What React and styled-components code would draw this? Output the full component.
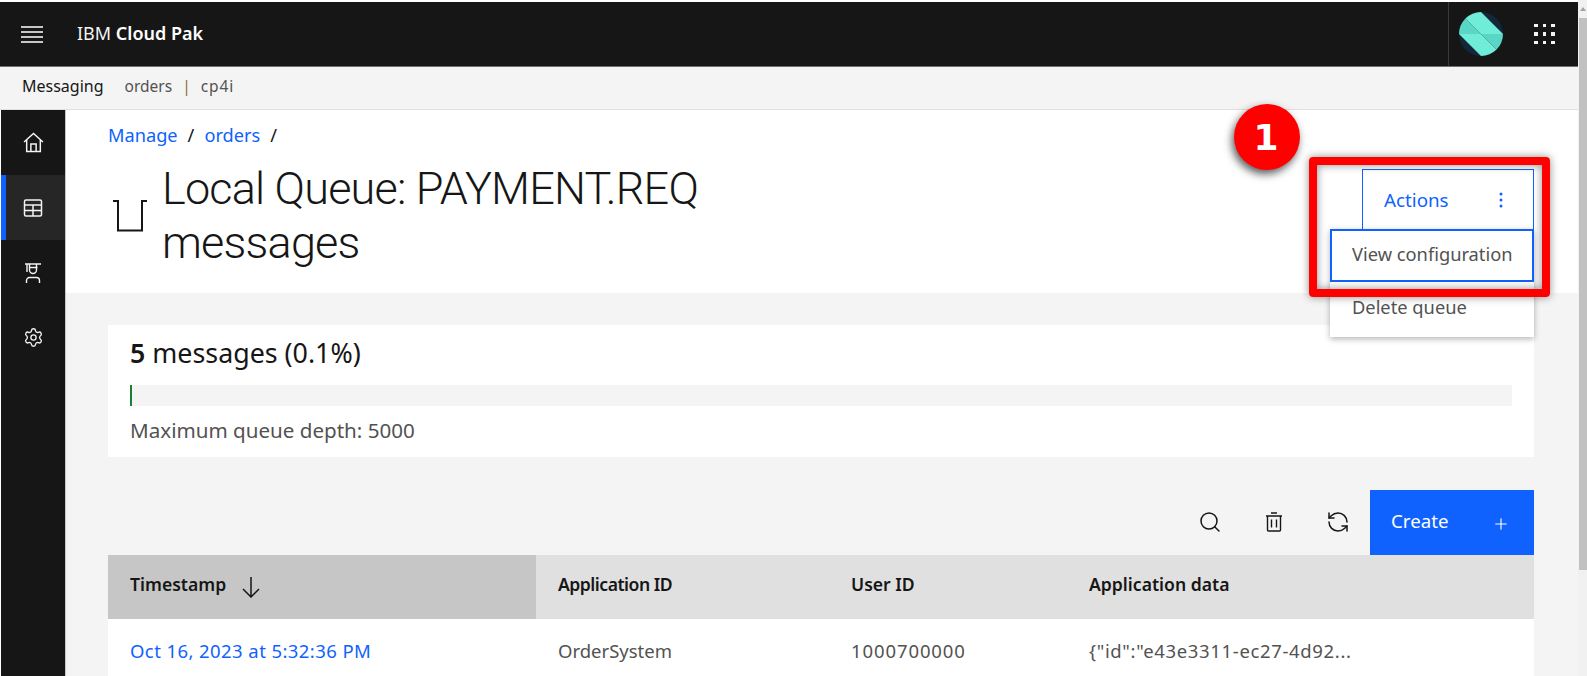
import React from "react";
import styled, { createGlobalStyle } from "styled-components";
import { Plus, Search, Settings, RefreshCcw } from "lucide-react";

const Global = createGlobalStyle`
  * { box-sizing: border-box; }
  html, body { margin: 0; padding: 0; height: 100%; overflow: hidden; background: #fff; }
  body { font-family: "Noto Sans", "Liberation Sans", sans-serif; color: #161616; }
`;

const Page = styled.div`
  display: flex;
  width: 1587px;
  height: 676px;
  overflow: hidden;
`;
const Content = styled.div`
  width: 1578px;
  display: flex;
  flex-direction: column;
  padding-top: 2px;
`;
const Scrollbar = styled.div`
  flex: 1;
  background: #f1f1f1;
  display: flex;
  flex-direction: column;
  align-items: flex-end;
`;
const ScrollArrow = styled.div`
  width: 100%;
  height: 18px;
  display: flex;
  align-items: center;
  justify-content: center;
  &::before {
    content: "";
    border-left: 3px solid transparent;
    border-right: 3px solid transparent;
    border-bottom: 4px solid #a3a3a3;
  }
`;
const ScrollThumb = styled.div`
  width: 8px;
  height: 552px;
  background: #c1c1c1;
`;

const Header = styled.header`
  height: 65px;
  flex: none;
  background: #161616;
  border-bottom: 1px solid #6f6f6f;
  display: flex;
  align-items: center;
`;
const MenuButton = styled.div`
  width: 77px;
  padding-left: 21px;
  display: flex;
  flex-direction: column;
  gap: 3px;
  span { display: block; width: 22px; height: 2px; background: #c6c6c6; }
`;
const Brand = styled.div`
  color: #f4f4f4;
  font-size: 18px;
  padding-bottom: 2px;
  flex: 1;
  b { font-weight: 600; color: #fff; }
`;
const LogoCell = styled.div`
  width: 65px;
  height: 100%;
  border-left: 1px solid #393939;
  display: flex;
  align-items: center;
  padding-left: 10px;
`;
const AppsCell = styled.div`
  width: 65px;
  height: 100%;
  display: grid;
  grid-template-columns: repeat(3, 3.5px);
  grid-auto-rows: 3.5px;
  gap: 5px;
  align-content: center;
  padding-left: 21px;
  i { background: #f4f4f4; }
`;

const SubBar = styled.div`
  height: 43px;
  flex: none;
  background: #f4f4f4;
  border-bottom: 1px solid #e0e0e0;
  display: flex;
  align-items: center;
  padding: 0 0 5px 22px;
  font-size: 16px;
  color: #161616;
`;
const Instance = styled.span`
  color: #525252;
  margin-left: 21px;
  font-size: 15.5px;
  em { font-style: normal; color: #8a6d3b; margin: 0 10px; }
`;
const InstanceName = styled.span`
  letter-spacing: 0.9px;
`;

const Body = styled.div`
  flex: 1;
  display: flex;
  min-height: 0;
`;
const Sidebar = styled.nav`
  width: 65px;
  flex: none;
  margin-left: 1px;
  background: #161616;
  border-right: 1px solid #c6c6c6;
`;
const NavItem = styled.div`
  height: 65px;
  display: flex;
  align-items: center;
  justify-content: center;
  color: #f4f4f4;
  background: ${(p) => (p.$active ? "#262626" : "transparent")};
  border-left: 5px solid ${(p) => (p.$active ? "#0f62fe" : "transparent")};
  padding-right: 5px;
`;

const Main = styled.main`
  flex: 1;
  background: #f4f4f4;
  min-width: 0;
`;
const Head = styled.section`
  position: relative;
  height: 183px;
  background: #fff;
  padding: 13px 44px 0 42px;
  display: flex;
  justify-content: space-between;
  align-items: flex-start;
`;
const Crumbs = styled.div`
  font-size: 18.2px;
  line-height: 24px;
  color: #161616;
  a { color: #0f62fe; text-decoration: none; }
  span { margin: 0 10px; }
`;
const TitleRow = styled.div`
  display: flex;
  align-items: center;
  margin-top: 15px;
`;
const QueueIcon = styled.svg`
  width: 34px;
  height: 33px;
  margin: 0 15px 2px 5px;
  flex: none;
`;
const Title = styled.h1`
  margin: 0;
  width: 600px;
  font-family: Roboto, "Noto Sans", sans-serif;
  font-size: 45px;
  letter-spacing: -0.8px;
  line-height: 54px;
  font-weight: 300;
`;
const ActionsWrap = styled.div`
  position: relative;
  margin-top: 46px;
`;
const ActionsButton = styled.div`
  width: 172px;
  height: 60px;
  border: 1px solid #0f62fe;
  border-bottom: 0;
  background: #fff;
  color: #0f62fe;
  font-size: 18.8px;
  display: flex;
  align-items: center;
  justify-content: space-between;
  padding: 0 30px 0 21px;
`;
const Menu = styled.div`
  position: absolute;
  top: 60px;
  right: 0;
  width: 204px;
  background: #fff;
  box-shadow: 0 2px 6px rgba(0, 0, 0, 0.3);
`;
const MenuItem = styled.div`
  height: ${(p) => (p.$focused ? 53 : 55)}px;
  color: #525252;
  font-size: 18.3px;
  display: flex;
  align-items: center;
  padding: 0 0 ${(p) => (p.$focused ? 4 : 6)}px ${(p) => (p.$focused ? 20 : 22)}px;
  border: ${(p) => (p.$focused ? "2px solid #0f62fe" : "none")};
`;
const Callout = styled.div`
  position: absolute;
  left: 1243px;
  top: 47px;
  width: 241px;
  height: 140px;
  border: 8px solid #f00;
  border-radius: 4px;
  box-shadow: 0 0 8px rgba(0, 0, 0, 0.45), inset 0 0 8px rgba(0, 0, 0, 0.45);
`;
const Badge = styled.div`
  position: absolute;
  left: 1168px;
  top: -6px;
  width: 66px;
  height: 66px;
  padding-right: 2px;
  border-radius: 50%;
  background: #f00;
  color: #fff;
  font: 700 36px "DejaVu Sans", sans-serif;
  display: flex;
  align-items: center;
  justify-content: center;
  box-shadow: -2px 4px 8px rgba(0, 0, 0, 0.65);
`;

const Section = styled.div`
  padding: 32px 44px 0 42px;
`;
const Card = styled.div`
  height: 132px;
  background: #fff;
  padding: 11px 22px 0;
`;
const Count = styled.div`
  font-size: 26.8px;
  line-height: 33px;
  b { font-weight: 600; }
`;
const Track = styled.div`
  height: 21px;
  margin-top: 16px;
  background: #f4f4f4;
`;
const Fill = styled.div`
  height: 100%;
  background: #198038;
`;
const Depth = styled.div`
  margin-top: 11px;
  font-size: 20.6px;
  line-height: 26px;
  color: #525252;
`;

const Toolbar = styled.div`
  display: flex;
  justify-content: flex-end;
  height: 65px;
  margin-top: 33px;
`;
const ToolButton = styled.div`
  width: 64px;
  display: flex;
  align-items: center;
  justify-content: center;
  color: #161616;
  padding-bottom: 2px;
`;
const CreateButton = styled.div`
  width: 164px;
  background: #0f62fe;
  color: #fff;
  font-size: 18.7px;
  display: flex;
  align-items: center;
  justify-content: space-between;
  padding: 0 24px 5px 21px;
  svg { margin-top: 7px; }
`;

const Columns = styled.div`
  display: grid;
  grid-template-columns: 428px 293px 238px 467px;
`;
const HeadCell = styled.div`
  height: 64px;
  background: ${(p) => (p.$sorted ? "#c6c6c6" : "#e0e0e0")};
  font-size: 17.6px;
  font-weight: 600;
  letter-spacing: ${(p) => p.$spacing || 0}px;
  display: flex;
  align-items: center;
  gap: 16px;
  padding: 0 0 6px 22px;
`;
const SortIcon = styled.svg`
  margin-top: 7px;
`;
const Cell = styled.div`
  height: 64px;
  background: #fff;
  color: ${(p) => (p.$link ? "#0f62fe" : "#525252")};
  font-size: 18.5px;
  letter-spacing: ${(p) => p.$spacing || 0}px;
  display: flex;
  align-items: center;
  padding: 0 0 2px 22px;
`;

const HomeIcon = () => (
  <svg width="21" height="21" viewBox="0 0 20 20" fill="none" stroke="currentColor" strokeWidth="1.4">
    <path d="M1 9.500 10 1.500l9 8M3.500 7.500V18.500h13V7.500M7.500 18.500V11.500h5v7" />
  </svg>
);
const TableIcon = () => (
  <svg width="20" height="20" viewBox="0 0 20 20" fill="none" stroke="currentColor" strokeWidth="1.500">
    <rect x="1.500" y="2" width="17" height="16" rx="1.500" />
    <path d="M1.500 7h17M1.500 12.500h17M10 7v11" />
  </svg>
);
const LearnIcon = () => (
  <svg width="16" height="20" viewBox="0 0 16 20" fill="none" stroke="currentColor" strokeWidth="1.400">
    <path d="M0 1h16M2 1v8M4.500 4.500h8M4.500 1v6a3.500 3.500 0 0 0 7 0V1M1.500 20v-2.500a3 3 0 0 1 3-3h7a3 3 0 0 1 3 3V20" />
  </svg>
);
const TrashIcon = () => (
  <svg width="16" height="20" viewBox="0 0 16 20" fill="none" stroke="currentColor" strokeWidth="1.400">
    <path d="M0 4h16M5 1h6M1.500 4v14a1 1 0 0 0 1 1h11a1 1 0 0 0 1-1V4M5.500 7.500v8M10.500 7.500v8" />
  </svg>
);

const Logo = () => (
  <svg width="44" height="44" viewBox="0 0 44 44">
    <defs>
      <clipPath id="logoClip"><circle cx="22" cy="22" r="22" /></clipPath>
    </defs>
    <g clipPath="url(#logoClip)">
      <rect width="44" height="44" fill="#12273a" />
      <polygon points="6,6 22,22 0,22 0,6" fill="#5ad6c6" />
      <polygon points="6,6 6,0 22,0 44,22 22,22" fill="#6fedd8" />
      <polygon points="0,22 22,22 38,38 38,44 22,44" fill="#6fedd8" />
      <polygon points="22,22 44,22 44,38 38,38" fill="#5ad6c6" />
    </g>
  </svg>
);

export default function App() {
  return (
    <Page>
      <Global />
      <Content>
        <Header>
          <MenuButton><span /><span /><span /><span /></MenuButton>
          <Brand>IBM <b>Cloud Pak</b></Brand>
          <LogoCell><Logo /></LogoCell>
          <AppsCell>{Array.from({ length: 9 }).map((_, i) => <i key={i} />)}</AppsCell>
        </Header>
        <SubBar>
          Messaging
          <Instance>orders<em>|</em><InstanceName>cp4i</InstanceName></Instance>
        </SubBar>
        <Body>
          <Sidebar>
            <NavItem><HomeIcon /></NavItem>
            <NavItem $active><TableIcon /></NavItem>
            <NavItem><LearnIcon /></NavItem>
            <NavItem><Settings size={21} strokeWidth={1.5} /></NavItem>
          </Sidebar>
          <Main>
            <Head>
              <div>
                <Crumbs><a>Manage</a><span>/</span><a>orders</a><span>/</span></Crumbs>
                <TitleRow>
                  <QueueIcon viewBox="0 0 34 33" fill="none" stroke="#161616" strokeWidth="2">
                    <path d="M0 2h5v29.500h24V2h5" />
                  </QueueIcon>
                  <Title>Local Queue: PAYMENT.REQ<br />messages</Title>
                </TitleRow>
              </div>
              <ActionsWrap>
                <ActionsButton>
                  Actions
                  <svg width="4" height="18" viewBox="0 0 4 18" fill="#0f62fe">
                    <circle cx="2" cy="3" r="1.500" /><circle cx="2" cy="9" r="1.500" /><circle cx="2" cy="15" r="1.500" />
                  </svg>
                </ActionsButton>
                <Menu>
                  <MenuItem $focused>View configuration</MenuItem>
                  <MenuItem>Delete queue</MenuItem>
                </Menu>
              </ActionsWrap>
              <Callout />
              <Badge>1</Badge>
            </Head>
            <Section>
              <Card>
                <Count><b>5</b> messages (0.1%)</Count>
                <Track><Fill style={{ width: 2 }} /></Track>
                <Depth>Maximum queue depth: 5000</Depth>
              </Card>
              <Toolbar>
                <ToolButton><Search size={24} strokeWidth={1.5} /></ToolButton>
                <ToolButton><TrashIcon /></ToolButton>
                <ToolButton><RefreshCcw size={24} strokeWidth={1.5} /></ToolButton>
                <CreateButton>Create <Plus size={18} strokeWidth={1.5} /></CreateButton>
              </Toolbar>
              <Columns>
                <HeadCell $sorted>
                  Timestamp
                  <SortIcon width="18" height="21" viewBox="0 0 18 21" fill="none" stroke="#161616" strokeWidth="1.500">
                    <path d="M9 0v20M1 12l8 8 8-8" />
                  </SortIcon>
                </HeadCell>
                <HeadCell $spacing={-0.5}>Application ID</HeadCell>
                <HeadCell>User ID</HeadCell>
                <HeadCell>Application data</HeadCell>
                <Cell $link $spacing={0.42}>Oct 16, 2023 at 5:32:36 PM</Cell>
                <Cell>OrderSystem</Cell>
                <Cell $spacing={0.9}>1000700000</Cell>
                <Cell $spacing={0.65}>{'{"id":"e43e3311-ec27-4d92...'}</Cell>
              </Columns>
            </Section>
          </Main>
        </Body>
      </Content>
      <Scrollbar>
        <ScrollArrow />
        <ScrollThumb />
      </Scrollbar>
    </Page>
  );
}
